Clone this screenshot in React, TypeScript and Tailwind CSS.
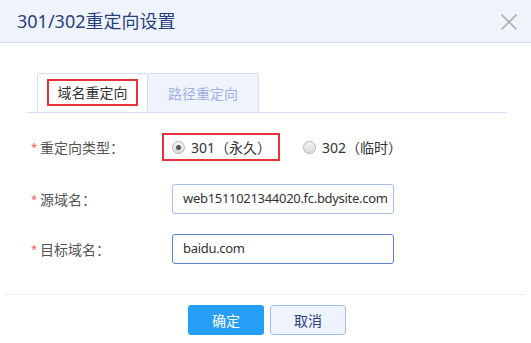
function Radio({ checked }: { checked?: boolean }) {
  return (
    <span className="w-[13px] h-[13px] rounded-full border border-[#b5b5b5] bg-gradient-to-b from-[#f4f4f4] to-[#d9d9d9] flex items-center justify-center">
      {checked && <span className="w-[5px] h-[5px] rounded-full bg-[#555]" />}
    </span>
  );
}

function Label({ text, w = "w-[172px]" }: { text: string; w?: string }) {
  return (
    <div className={`${w} shrink-0 flex items-center text-[14px] text-[#555] pl-[31px]`}>
      <span className="text-[#f25c5c] text-[11px] w-[9px]">*</span>
      <span>{text}</span>
    </div>
  );
}

export default function App() {
  return (
    <div
      className="w-[531px] h-[343px] bg-white overflow-hidden"
      style={{ fontFamily: '"Noto Sans", "Noto Sans CJK SC", sans-serif' }}
    >
      {/* header */}
      <div className="h-[43px] bg-[#eff4fc] border-b border-[#d8dfee] flex items-center justify-between pl-[17px] pr-[14px]">
        <div className="text-[18px] text-[#2b3e7c]">301/302重定向设置</div>
        <svg width="16" height="16" viewBox="0 0 16 16" className="mt-[2px]">
          <path d="M0.5 0.5L15.5 15.5M15.5 0.5L0.5 15.5" stroke="#b3b3b3" strokeWidth="1.6" />
        </svg>
      </div>

      {/* body */}
      <div className="pt-[30px] pl-[27px]">
        <div className="w-[480px] border-b border-[#d3ddf3] flex pl-[10px]">
          <div className="w-[111px] h-[39px] -mb-px bg-white border border-[#d3ddf3] border-b-white rounded-t-[2px] flex items-center justify-center">
            <div className="w-[91px] h-[27px] border-2 border-[#e8323c] flex items-center justify-center text-[14px] text-[#333]">
              域名重定向
            </div>
          </div>
          <div className="w-[111px] h-[39px] bg-[#eff4fc] border border-l-0 border-b-0 border-[#d3ddf3] rounded-t-[2px] flex items-center justify-center text-[14px] text-[#9fb0e2]">
            路径重定向
          </div>
        </div>
      </div>

      {/* form */}
      <div className="flex flex-col">
        <div className="flex items-center mt-[20px] h-[28px]">
          <Label text="重定向类型：" w="w-[162px]" />
          <div className="w-[118px] h-[28px] border-2 border-[#e8323c] flex items-center pl-[8px] gap-[6px] text-[14px] text-[#333]">
            <Radio checked />
            <span>301（永久）</span>
          </div>
          <div className="flex items-center ml-[23px] gap-[6px] text-[14px] text-[#333]">
            <Radio />
            <span>302（临时）</span>
          </div>
        </div>

        <div className="flex items-center mt-[23px]">
          <Label text="源域名：" />
          <div className="w-[222px] h-[30px] border border-[#a9bbe6] rounded-[3px] flex items-center pl-[10px] text-[13px] text-[#333] whitespace-nowrap overflow-hidden tracking-[-0.3px]">
            web1511021344020.fc.bdysite.com
          </div>
        </div>

        <div className="flex items-center mt-[20px]">
          <Label text="目标域名：" />
          <div className="w-[222px] h-[30px] border border-[#5f82cf] rounded-[3px] flex items-center pl-[10px] text-[13px] text-[#333] tracking-[-0.3px]">
            baidu.com
          </div>
        </div>
      </div>

      {/* footer */}
      <div className="mt-[30px] mx-[5px] border-t border-[#ebedf0] flex justify-center gap-[6px] pt-[10px]">
        <button className="w-[76px] h-[30px] rounded-[3px] bg-[#269ef5] text-white text-[14px] ml-[3px]">确定</button>
        <button className="w-[76px] h-[30px] rounded-[3px] bg-[#eff4fc] border border-[#abbde6] text-[#2b3e7c] text-[14px]">取消</button>
      </div>
    </div>
  );
}
